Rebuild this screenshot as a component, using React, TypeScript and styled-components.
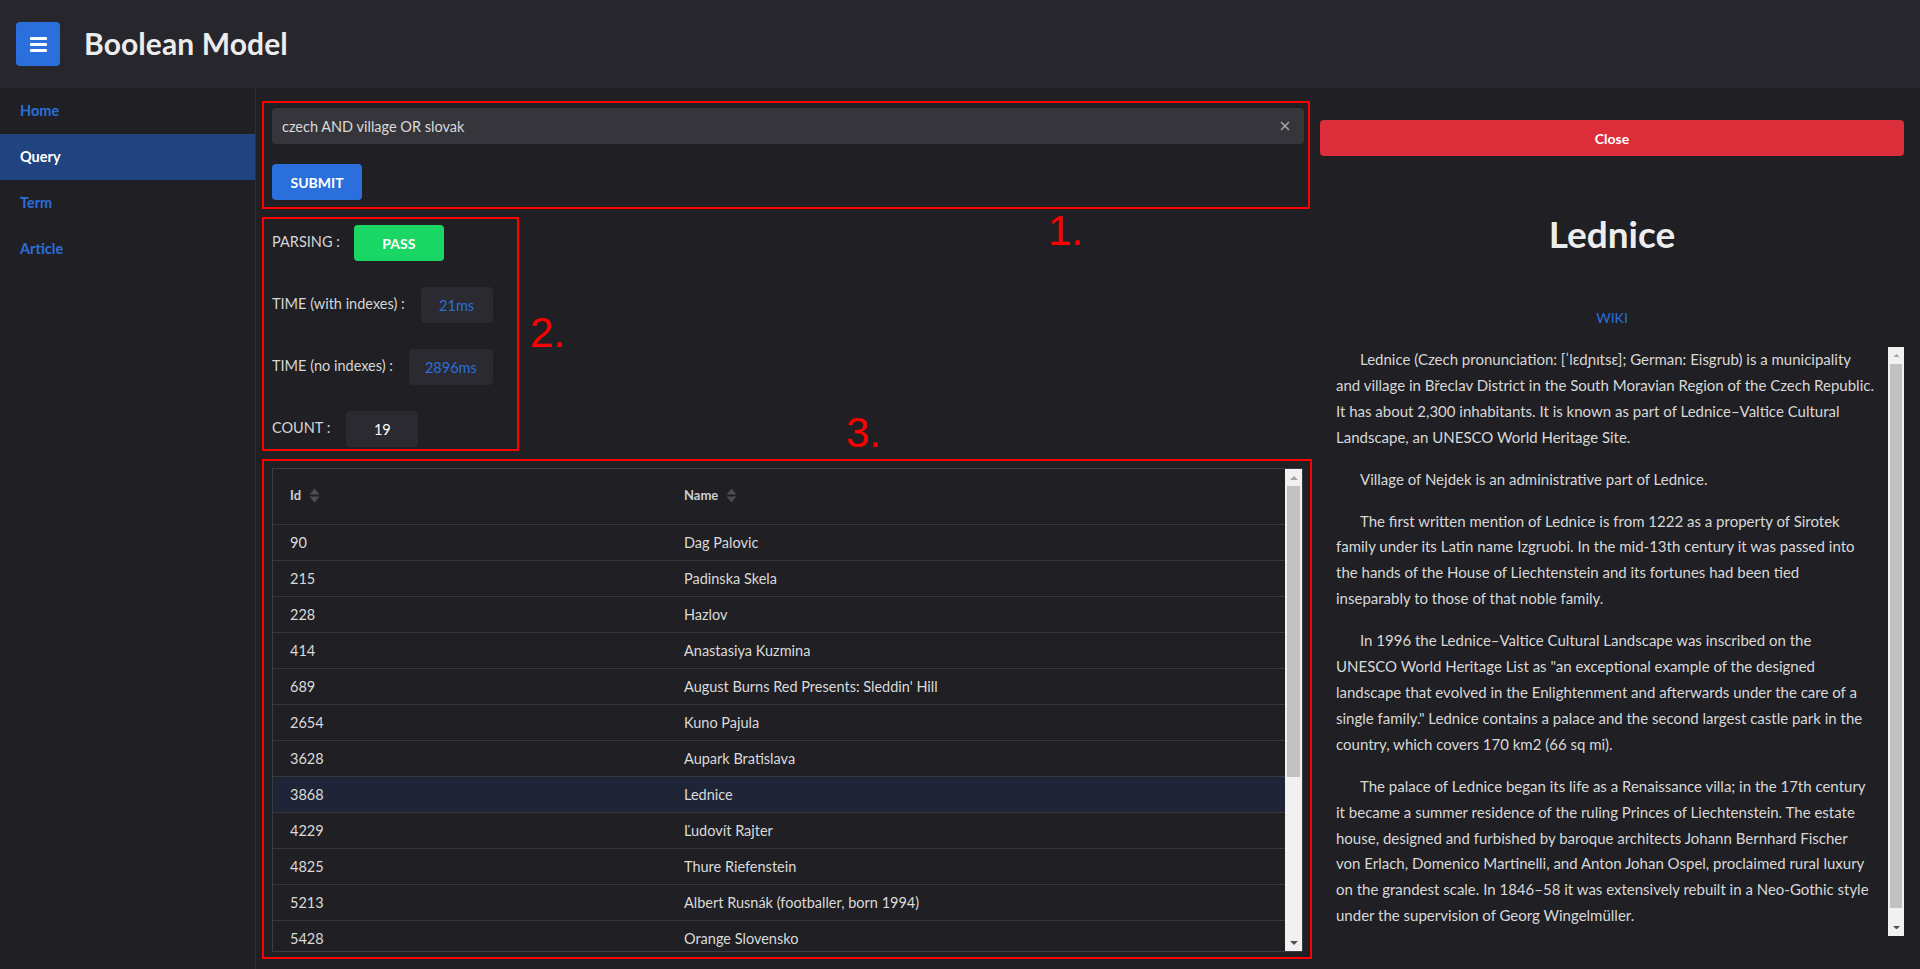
import React from "react";
import styled, { createGlobalStyle } from "styled-components";
import { X } from "lucide-react";

const FONT = `Lato, "Noto Sans", "DejaVu Sans", sans-serif`;
const BLUE = "#2a6fdb";

const Global = createGlobalStyle`
  html, body { margin: 0; padding: 0; background: #1f1f24; }
  body { font-family: ${FONT}; color: #dcdcdc; }
  * { box-sizing: border-box; }
`;

const Page = styled.div`
  width: 1920px;
  height: 969px;
  display: flex;
  flex-direction: column;
  overflow: hidden;
`;

const Header = styled.header`
  height: 88px;
  flex: none;
  background: #26262c;
  display: flex;
  align-items: center;
  padding-left: 16px;
  gap: 24px;
`;

const MenuButton = styled.button`
  width: 44px;
  height: 44px;
  border: none;
  border-radius: 4px;
  background: ${BLUE};
  display: flex;
  flex-direction: column;
  align-items: center;
  justify-content: center;
  gap: 3px;
  padding: 0;
`;

const MenuBar = styled.span`
  width: 17px;
  height: 3px;
  border-radius: 1px;
  background: #ffffff;
`;

const AppTitle = styled.h1`
  margin: 0 0 2px;
  font-size: 30px;
  font-weight: 700;
  color: #ececec;
  letter-spacing: 0.1px;
`;

const Body = styled.div`
  flex: 1;
  display: grid;
  grid-template-columns: 256px 1fr;
  min-height: 0;
`;

const Sidebar = styled.nav`
  border-right: 1px solid #303036;
  display: flex;
  flex-direction: column;
`;

const NavItem = styled.a<{ $active?: boolean }>`
  height: 46px;
  display: flex;
  align-items: center;
  padding: 0 0 2px 20px;
  font-size: 14.5px;
  font-weight: 700;
  color: ${(p) => (p.$active ? "#ffffff" : BLUE)};
  background: ${(p) => (p.$active ? "#214480" : "transparent")};
  text-decoration: none;
`;

const Main = styled.main`
  display: grid;
  grid-template-columns: 1050px 584px;
  column-gap: 8px;
  align-items: start;
  padding: 13px 0 0 6px;
`;

const LeftColumn = styled.section`
  position: relative;
  display: flex;
  flex-direction: column;
  gap: 8px;
`;

const MarkedBox = styled.div`
  border: 2px solid #ff0000;
`;

const QueryBox = styled(MarkedBox)`
  width: 1048px;
  padding: 5px 4px 7px 8px;
  display: flex;
  flex-direction: column;
  align-items: flex-start;
  gap: 20px;
`;

const InputWrap = styled.div`
  width: 100%;
  height: 36px;
  background: #35353b;
  border-radius: 4px;
  display: flex;
  align-items: center;
  padding: 0 12px 0 10px;
`;

const QueryInput = styled.input`
  flex: 1;
  background: transparent;
  border: none;
  outline: none;
  color: #dadada;
  font-family: ${FONT};
  font-size: 14.5px;
  padding: 0;
`;

const ClearIcon = styled(X)`
  color: #a0a0a4;
  flex: none;
`;

const SolidButton = styled.button<{ $bg: string; $w?: string }>`
  width: ${(p) => p.$w ?? "90px"};
  height: 36px;
  border: none;
  border-radius: 4px;
  background: ${(p) => p.$bg};
  color: #ffffff;
  font-family: ${FONT};
  font-weight: 700;
  font-size: 14px;
  padding: 0;
`;

const StatsBox = styled(MarkedBox)`
  width: 257px;
  padding: 6px 8px 2px;
  display: flex;
  flex-direction: column;
  gap: 26px;
`;

const StatRow = styled.div`
  height: 36px;
  display: flex;
  align-items: center;
  gap: 16px;
`;

const StatLabel = styled.span`
  font-size: 14.5px;
  color: #d6d6d6;
  white-space: nowrap;
  padding-bottom: 4px;
`;

const PassBadge = styled.div`
  width: 90px;
  height: 36px;
  margin-left: -2px;
  border-radius: 4px;
  background: #19d665;
  color: #ffffff;
  font-weight: 700;
  font-size: 14px;
  display: flex;
  align-items: center;
  justify-content: center;
`;

const ValueBox = styled.div<{ $tone: "blue" | "white" }>`
  min-width: 72px;
  height: 36px;
  padding: 0 16px;
  border-radius: 4px;
  background: #2a2a30;
  color: ${(p) => (p.$tone === "blue" ? BLUE : "#ffffff")};
  font-size: 14.5px;
  display: flex;
  align-items: center;
  justify-content: center;
`;

const TableBox = styled(MarkedBox)`
  width: 1050px;
  height: 500px;
  padding: 7px 7px 5px 8px;
`;

const Table = styled.div`
  height: 484px;
  border: 1px solid #3c3c42;
  display: flex;
`;

const TableScroll = styled.div`
  flex: 1;
  overflow: hidden;
`;

const GridRow = styled.div<{ $head?: boolean; $selected?: boolean }>`
  display: grid;
  grid-template-columns: 394px 1fr;
  align-items: center;
  height: ${(p) => (p.$head ? "56px" : "36px")};
  padding-bottom: ${(p) => (p.$head ? "3px" : "0")};
  border-bottom: 1px solid #37373d;
  background: ${(p) => (p.$selected ? "#1f2537" : "transparent")};
`;

const Cell = styled.div<{ $head?: boolean }>`
  padding-left: 17px;
  font-size: ${(p) => (p.$head ? "13px" : "14.5px")};
  font-weight: ${(p) => (p.$head ? 700 : 400)};
  color: ${(p) => (p.$head ? "#cfcfd2" : "#dadada")};
  display: flex;
  align-items: center;
  gap: 8px;
`;

const Annotation = styled.span<{ $x: number; $y: number }>`
  position: absolute;
  left: ${(p) => p.$x}px;
  top: ${(p) => p.$y}px;
  font-family: "Liberation Sans", sans-serif;
  font-size: 42px;
  line-height: 42px;
  color: #ff0000;
`;

const RightColumn = styled.aside`
  display: flex;
  flex-direction: column;
  padding-top: 19px;
`;

const ArticleTitle = styled.h2`
  margin: 56px 0 0;
  font-size: 37px;
  line-height: 44px;
  font-weight: 700;
  text-align: center;
  color: #ededed;
`;

const WikiLink = styled.a`
  margin-top: 52px;
  align-self: center;
  font-size: 14px;
  line-height: 20px;
  color: ${BLUE};
  text-decoration: none;
`;

const ArticleFrame = styled.div`
  margin-top: 19px;
  height: 589px;
  display: flex;
`;

const ArticleBody = styled.div`
  flex: 1;
  overflow: hidden;
  padding: 0 13px 0 16px;
`;

const Para = styled.p`
  margin: 0 0 16px;
  text-indent: 24px;
  font-size: 15px;
  line-height: 25.9px;
  color: #d8d8d8;
`;

const ScrollTrack = styled.div<{ $w: number }>`
  width: ${(p) => p.$w}px;
  flex: none;
  background: #f1f1f1;
  display: flex;
  flex-direction: column;
`;

const ScrollArrow = styled.div`
  height: 17px;
  flex: none;
  display: flex;
  align-items: center;
  justify-content: center;
`;

const ThumbLane = styled.div<{ $inset: number }>`
  flex: 1;
  padding: 0 ${(p) => p.$inset}px;
`;

const Thumb = styled.div`
  background: #c1c1c1;
`;

function Triangle({ dir, color, w }: { dir: "up" | "down"; color: string; w: number }) {
  const h = w / 2;
  const d = dir === "up" ? `M0 ${h} L${w / 2} 0 L${w} ${h}Z` : `M0 0 L${w} 0 L${w / 2} ${h}Z`;
  return (
    <svg width={w} height={h} viewBox={`0 0 ${w} ${h}`}>
      <path d={d} fill={color} />
    </svg>
  );
}

function FakeScrollbar({ width, inset, ratio, arrowW }: { width: number; inset: number; ratio: number; arrowW: number }) {
  return (
    <ScrollTrack $w={width}>
      <ScrollArrow>
        <Triangle dir="up" color="#a3a3a3" w={arrowW} />
      </ScrollArrow>
      <ThumbLane $inset={inset}>
        <Thumb style={{ height: `${Math.round(ratio * 100)}%` }} />
      </ThumbLane>
      <ScrollArrow>
        <Triangle dir="down" color="#505050" w={arrowW} />
      </ScrollArrow>
    </ScrollTrack>
  );
}

function SortIcon() {
  return (
    <svg width="11" height="15" viewBox="0 0 11 15">
      <path d="M0.5 6.5 L5.5 0.5 L10.5 6.5Z" fill="#4c4c54" />
      <path d="M0.5 8.5 L10.5 8.5 L5.5 14.5Z" fill="#4c4c54" />
    </svg>
  );
}

const rows: [number, string][] = [
  [90, "Dag Palovic"],
  [215, "Padinska Skela"],
  [228, "Hazlov"],
  [414, "Anastasiya Kuzmina"],
  [689, "August Burns Red Presents: Sleddin' Hill"],
  [2654, "Kuno Pajula"],
  [3628, "Aupark Bratislava"],
  [3868, "Lednice"],
  [4229, "Ľudovít Rajter"],
  [4825, "Thure Riefenstein"],
  [5213, "Albert Rusnák (footballer, born 1994)"],
  [5428, "Orange Slovensko"],
];

const paragraphs = [
  "Lednice (Czech pronunciation: [ˈlɛdɲɪtsɛ]; German: Eisgrub) is a municipality and village in Břeclav District in the South Moravian Region of the Czech Republic. It has about 2,300 inhabitants. It is known as part of Lednice–Valtice Cultural Landscape, an UNESCO World Heritage Site.",
  "Village of Nejdek is an administrative part of Lednice.",
  "The first written mention of Lednice is from 1222 as a property of Sirotek family under its Latin name Izgruobi. In the mid-13th century it was passed into the hands of the House of Liechtenstein and its fortunes had been tied inseparably to those of that noble family.",
  'In 1996 the Lednice–Valtice Cultural Landscape was inscribed on the UNESCO World Heritage List as "an exceptional example of the designed landscape that evolved in the Enlightenment and afterwards under the care of a single family." Lednice contains a palace and the second largest castle park in the country, which covers 170 km2 (66 sq mi).',
  "The palace of Lednice began its life as a Renaissance villa; in the 17th century it became a summer residence of the ruling Princes of Liechtenstein. The estate house, designed and furbished by baroque architects Johann Bernhard Fischer von Erlach, Domenico Martinelli, and Anton Johan Ospel, proclaimed rural luxury on the grandest scale. In 1846–58 it was extensively rebuilt in a Neo-Gothic style under the supervision of Georg Wingelmüller.",
];

const COUNT = 19;
const tableViewport = 482;
const tableContent = 56 + COUNT * 36;

export default function App() {
  return (
    <Page>
      <Global />
      <Header>
        <MenuButton aria-label="menu">
          <MenuBar />
          <MenuBar />
          <MenuBar />
        </MenuButton>
        <AppTitle>Boolean Model</AppTitle>
      </Header>
      <Body>
        <Sidebar>
          <NavItem href="#">Home</NavItem>
          <NavItem href="#" $active>
            Query
          </NavItem>
          <NavItem href="#">Term</NavItem>
          <NavItem href="#">Article</NavItem>
        </Sidebar>
        <Main>
          <LeftColumn>
            <QueryBox>
              <InputWrap>
                <QueryInput defaultValue="czech AND village OR slovak" />
                <ClearIcon size={14} strokeWidth={3} />
              </InputWrap>
              <SolidButton $bg={BLUE}>SUBMIT</SolidButton>
            </QueryBox>
            <StatsBox>
              <StatRow>
                <StatLabel>PARSING :</StatLabel>
                <PassBadge>PASS</PassBadge>
              </StatRow>
              <StatRow>
                <StatLabel>TIME (with indexes) :</StatLabel>
                <ValueBox $tone="blue">21ms</ValueBox>
              </StatRow>
              <StatRow>
                <StatLabel>TIME (no indexes) :</StatLabel>
                <ValueBox $tone="blue">2896ms</ValueBox>
              </StatRow>
              <StatRow>
                <StatLabel>COUNT :</StatLabel>
                <ValueBox $tone="white">{COUNT}</ValueBox>
              </StatRow>
            </StatsBox>
            <TableBox>
              <Table>
                <TableScroll>
                  <GridRow $head>
                    <Cell $head>
                      Id <SortIcon />
                    </Cell>
                    <Cell $head>
                      Name <SortIcon />
                    </Cell>
                  </GridRow>
                  {rows.map(([id, name]) => (
                    <GridRow key={id} $selected={name === "Lednice"}>
                      <Cell>{id}</Cell>
                      <Cell>{name}</Cell>
                    </GridRow>
                  ))}
                </TableScroll>
                <FakeScrollbar width={17} inset={2} ratio={tableViewport / tableContent} arrowW={8} />
              </Table>
            </TableBox>
            <Annotation $x={786} $y={109}>1.</Annotation>
            <Annotation $x={268} $y={211}>2.</Annotation>
            <Annotation $x={584} $y={311}>3.</Annotation>
          </LeftColumn>
          <RightColumn>
            <SolidButton $bg="#dc2d3a" $w="100%">
              Close
            </SolidButton>
            <ArticleTitle>Lednice</ArticleTitle>
            <WikiLink href="#">WIKI</WikiLink>
            <ArticleFrame>
              <ArticleBody>
                {paragraphs.map((t, i) => (
                  <Para key={i}>{t}</Para>
                ))}
              </ArticleBody>
              <FakeScrollbar width={16} inset={2} ratio={0.98} arrowW={7} />
            </ArticleFrame>
          </RightColumn>
        </Main>
      </Body>
    </Page>
  );
}
